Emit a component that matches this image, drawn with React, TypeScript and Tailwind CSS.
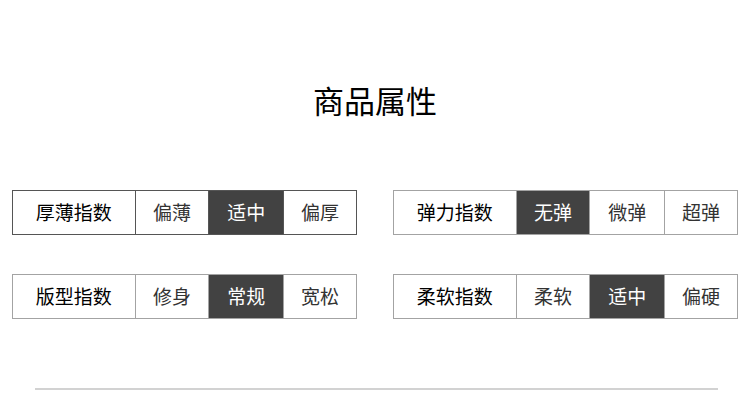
const font = { fontFamily: '"Noto Sans CJK SC", "Noto Sans", sans-serif' };

interface AttrRow {
    label: string,
    options: string[],
    active: number,
    dark?: boolean
}

const rows: AttrRow[] = [
    { label: "厚薄指数", options: ["偏薄", "适中", "偏厚"], active: 1, dark: true },
    { label: "弹力指数", options: ["无弹", "微弹", "超弹"], active: 0 },
    { label: "版型指数", options: ["修身", "常规", "宽松"], active: 1 },
    { label: "柔软指数", options: ["柔软", "适中", "偏硬"], active: 1 },
];

const widths = ["w-[74px]", "w-[75px]", "w-[73px]"];

const AttrBox = ({ label, options, active, dark }: AttrRow) => {
    const line = dark ? "border-[#555555]" : "border-[#a3a3a3]";
    return (
        <div className={`flex w-[345px] h-[45px] border ${line}`}>
            <div className="w-[122px] flex items-center justify-center text-[19px] text-black">{label}</div>
            {options.map((opt, i) => (
                <div
                    key={`opt_${i}`}
                    className={`${widths[i]} border-l ${line} flex items-center justify-center text-[19px] ${i === active ? "bg-[#424242] text-white" : "text-[#333333]"}`}
                >
                    {opt}
                </div>
            ))}
        </div>
    );
};

export default function App() {
    return (
        <div className="w-[750px] h-[410px] bg-white overflow-hidden" style={font}>
            <h1 className="pt-[84px] text-center text-[31px] leading-[31px] text-black">商品属性</h1>
            <div className="grid grid-cols-[345px_345px] gap-x-[36px] gap-y-[39px] pl-[12px] mt-[75px]">
                {rows.map((row, i) => (
                    <AttrBox key={`row_${i}`} {...row} />
                ))}
            </div>
            <div className="ml-[35px] w-[683px] h-[2px] bg-[#d2d2d2] mt-[69px]" />
        </div>
    );
}
